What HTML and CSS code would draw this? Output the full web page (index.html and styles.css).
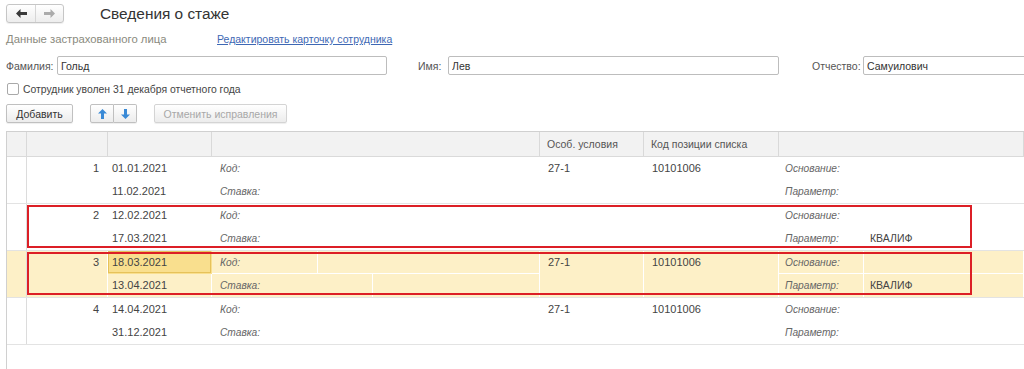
FILE: index.html
```html
<!DOCTYPE html>
<html lang="ru">
<head>
    <meta charset="UTF-8">
    <meta name="viewport" content="width=device-width, initial-scale=1.0">
    <title>Сведения о стаже</title>
    <link rel="stylesheet" href="styles.css">
</head>
<body>
    <!-- Title bar -->
    <div class="topbar">
        <div class="nav">
            <button class="nav-btn">
                <svg width="11" height="9" viewBox="0 0 11 9"><path d="M0 4.5 L4.5 0 V3 H11 V6 H4.5 V9 Z" fill="#3a3a3a"/></svg>
            </button>
            <button class="nav-btn">
                <svg width="11" height="9" viewBox="0 0 11 9"><path d="M11 4.5 L6.5 0 V3 H0 V6 H6.5 V9 Z" fill="#ababab"/></svg>
            </button>
        </div>
        <div class="title">Сведения о стаже</div>
    </div>

    <div class="info">
        <span class="info-label">Данные застрахованного лица</span>
        <a class="info-link" href="#">Редактировать карточку сотрудника</a>
    </div>

    <!-- Person fields -->
    <div class="fields">
        <div class="field field-1">
            <label class="field-label">Фамилия:</label>
            <input class="input" type="text" value="Гольд">
        </div>
        <div class="field field-2">
            <label class="field-label">Имя:</label>
            <input class="input" type="text" value="Лев">
        </div>
        <div class="field field-3">
            <label class="field-label">Отчество:</label>
            <input class="input" type="text" value="Самуилович">
        </div>
    </div>

    <div class="check-row">
        <span class="checkbox"></span>
        <span class="check-text">Сотрудник уволен 31 декабря отчетного года</span>
    </div>

    <!-- Command bar -->
    <div class="toolbar">
        <button class="btn btn-add">Добавить</button>
        <div class="btn-group">
            <button class="btn btn-arrow">
                <svg width="9" height="10" viewBox="0 0 9 10"><path d="M4.5 0 L9 4.5 H6 V10 H3 V4.5 H0 Z" fill="#3a8ad6"/></svg>
            </button>
            <button class="btn btn-arrow">
                <svg width="9" height="10" viewBox="0 0 9 10"><path d="M4.5 10 L9 5.5 H6 V0 H3 V5.5 H0 Z" fill="#3a8ad6"/></svg>
            </button>
        </div>
        <button class="btn btn-disabled">Отменить исправления</button>
    </div>

    <!-- Periods table -->
    <div class="grid">
        <div class="grid-head">
            <div class="head-cell"></div>
            <div class="head-cell"></div>
            <div class="head-cell"></div>
            <div class="head-cell"></div>
            <div class="head-cell">Особ. условия</div>
            <div class="head-cell">Код позиции списка</div>
            <div class="head-cell"></div>
        </div>

        <div class="record">
            <div class="c ind"></div>
            <div class="c num">1</div>
            <div class="c top date">01.01.2021</div>
            <div class="c top lbl kod-l">Код:</div>
            <div class="c top kod-v"></div>
            <div class="c osob">27-1</div>
            <div class="c pos">10101006</div>
            <div class="c top lbl osn-l">Основание:</div>
            <div class="c top val osn-v"></div>
            <div class="c bottom date">11.02.2021</div>
            <div class="c bottom lbl st-l">Ставка:</div>
            <div class="c bottom st-v"></div>
            <div class="c bottom lbl par-l">Параметр:</div>
            <div class="c bottom val par-v"></div>
        </div>

        <div class="record marked">
            <div class="c ind"></div>
            <div class="c num">2</div>
            <div class="c top date">12.02.2021</div>
            <div class="c top lbl kod-l">Код:</div>
            <div class="c top kod-v"></div>
            <div class="c osob"></div>
            <div class="c pos"></div>
            <div class="c top lbl osn-l">Основание:</div>
            <div class="c top val osn-v"></div>
            <div class="c bottom date">17.03.2021</div>
            <div class="c bottom lbl st-l">Ставка:</div>
            <div class="c bottom st-v"></div>
            <div class="c bottom lbl par-l">Параметр:</div>
            <div class="c bottom val par-v">КВАЛИФ</div>
        </div>

        <div class="record marked current">
            <div class="c ind"></div>
            <div class="c num">3</div>
            <div class="c top date sel">18.03.2021</div>
            <div class="c top lbl kod-l">Код:</div>
            <div class="c top kod-v"></div>
            <div class="c osob">27-1</div>
            <div class="c pos">10101006</div>
            <div class="c top lbl osn-l">Основание:</div>
            <div class="c top val osn-v"></div>
            <div class="c bottom date">13.04.2021</div>
            <div class="c bottom lbl st-l">Ставка:</div>
            <div class="c bottom st-v"></div>
            <div class="c bottom lbl par-l">Параметр:</div>
            <div class="c bottom val par-v">КВАЛИФ</div>
        </div>

        <div class="record">
            <div class="c ind"></div>
            <div class="c num">4</div>
            <div class="c top date">14.04.2021</div>
            <div class="c top lbl kod-l">Код:</div>
            <div class="c top kod-v"></div>
            <div class="c osob">27-1</div>
            <div class="c pos">10101006</div>
            <div class="c top lbl osn-l">Основание:</div>
            <div class="c top val osn-v"></div>
            <div class="c bottom date">31.12.2021</div>
            <div class="c bottom lbl st-l">Ставка:</div>
            <div class="c bottom st-v"></div>
            <div class="c bottom lbl par-l">Параметр:</div>
            <div class="c bottom val par-v"></div>
        </div>
    </div>
</body>
</html>
```

FILE: styles.css
```css
/* General */
body {
    margin: 0;
    font-family: "Liberation Sans", Arial, sans-serif;
    font-size: 10.5px;
    color: #333;
    background: #fff;
    height: 369px;
    overflow: hidden;
    display: flex;
    flex-direction: column;
}
button {
    font: inherit;
    margin: 0;
    cursor: pointer;
}

/* Title bar */
.topbar {
    display: flex;
    align-items: center;
    height: 19px;
    padding: 4px 6px 0;
}
.nav {
    display: flex;
    height: 19px;
    box-sizing: border-box;
    border: 1px solid #c6c6c6;
    border-radius: 3px;
    background: linear-gradient(#fff, #ededed);
    box-shadow: 0 1px 1px rgba(0, 0, 0, 0.07);
}
.nav-btn {
    width: 28px;
    height: 17px;
    padding: 0;
    border: 0;
    background: none;
    display: flex;
    align-items: center;
    justify-content: center;
}
.nav-btn + .nav-btn {
    border-left: 1px solid #d6d6d6;
}
.title {
    margin-left: 36px;
    font-size: 15.4px;
    color: #333;
}

/* Info line */
.info {
    display: flex;
    align-items: center;
    height: 22px;
    margin-top: 5px;
    padding: 0 6px;
}
.info-label {
    width: 211px;
    font-size: 11.3px;
    color: #8a8a7e;
}
.info-link {
    color: #3e68b4;
    text-decoration: underline;
}

/* Fields */
.fields {
    display: flex;
    margin-top: 6px;
    padding-left: 6px;
    overflow: hidden;
}
.field {
    display: flex;
    align-items: center;
    flex: none;
}
.field-label {
    color: #555;
    flex: none;
    white-space: nowrap;
}
.field-1 { width: 381px; }
.field-1 .field-label { width: 51px; }
.field-2 { width: 361px; margin-left: 31px; }
.field-2 .field-label { width: 30px; }
.field-3 { width: 300px; margin-left: 33px; }
.field-3 .field-label { width: 51px; }
.input {
    flex: 1;
    min-width: 0;
    height: 19px;
    box-sizing: border-box;
    border: 1px solid #bdbdbd;
    border-radius: 2px;
    padding: 0 3px;
    font: inherit;
    color: #333;
    outline: none;
}

/* Checkbox */
.check-row {
    display: flex;
    align-items: center;
    height: 20px;
    margin-top: 4px;
    padding-left: 7px;
}
.checkbox {
    width: 12px;
    height: 12px;
    box-sizing: border-box;
    border: 1px solid #a9a9a9;
    border-radius: 2px;
    background: #fff;
}
.check-text {
    margin-left: 4px;
    font-size: 10.4px;
    color: #444;
}

/* Command bar */
.toolbar {
    display: flex;
    height: 19px;
    margin-top: 5px;
    padding-left: 6px;
}
.btn {
    height: 19px;
    box-sizing: border-box;
    border: 1px solid #c0c0c0;
    border-radius: 2px;
    background: linear-gradient(#fff, #ececec);
    box-shadow: 0 1px 1px rgba(0, 0, 0, 0.07);
    color: #333;
    padding: 0;
}
.btn-add {
    width: 67px;
}
.btn-group {
    display: flex;
    margin-left: 17px;
}
.btn-arrow {
    width: 24px;
    display: flex;
    align-items: center;
    justify-content: center;
}
.btn-arrow:first-child {
    border-radius: 2px 0 0 2px;
}
.btn-arrow + .btn-arrow {
    border-left: 0;
    width: 23px;
    border-radius: 0 2px 2px 0;
}
.btn-disabled {
    width: 133px;
    margin-left: 17px;
    color: #a8a8a8;
    border-color: #d4d4d4;
    cursor: default;
}

/* Table */
.grid {
    flex: 1;
    margin: 8px 0 0 6px;
    border-left: 1px solid #d0d0d0;
    border-top: 1px solid #d0d0d0;
}
.grid-head {
    display: grid;
    grid-template-columns: 20px 81px 104px 328px 104px 135px 1fr;
    height: 25px;
    box-sizing: border-box;
    background: #f2f2f2;
    border-bottom: 1px solid #dadada;
}
.head-cell {
    border-right: 1px solid #d9d9d9;
    padding: 0 7px;
    line-height: 24px;
    color: #555;
    white-space: nowrap;
}
.record {
    position: relative;
    display: grid;
    grid-template-columns: 20px 81px 104px 106px 55px 167px 104px 135px 85px 1fr;
    grid-template-rows: 23px 23px;
    border-bottom: 1px solid #e3e3e3;
    font-size: 11px;
    color: #444;
}
.record.current {
    background: #fdf0c7;
}
.c {
    box-sizing: border-box;
    border-right: 1px solid #fff;
    padding: 0 6px;
    line-height: 22px;
    white-space: nowrap;
    overflow: hidden;
}
.top {
    grid-row: 1;
    border-bottom: 1px solid #fff;
    line-height: 23px;
}
.bottom {
    grid-row: 2;
    line-height: 23px;
}
.lbl {
    font-style: italic;
    font-size: 10.2px;
    color: #666;
}
.val {
    font-size: 10.5px;
}
.ind { grid-column: 1; grid-row: 1 / 3; border-right-color: #dcdcdc; }
.num { grid-column: 2; grid-row: 1 / 3; text-align: right; padding-right: 8px; }
.date { grid-column: 3; padding-left: 4px; }
.kod-l { grid-column: 4; padding-left: 8px; }
.kod-v { grid-column: 5 / 7; }
.osob { grid-column: 7; grid-row: 1 / 3; padding-left: 8px; }
.pos { grid-column: 8; grid-row: 1 / 3; padding-left: 8px; }
.osn-l { grid-column: 9; }
.osn-v { grid-column: 10; }
.st-l { grid-column: 4 / 6; padding-left: 8px; }
.st-v { grid-column: 6; }
.par-l { grid-column: 9; }
.par-v { grid-column: 10; }
.c.sel {
    background: #f9df8e;
    box-shadow: inset 0 0 0 1px #e6c25a;
    border-color: transparent;
    line-height: 22px;
}

/* Highlight frame drawn over marked records */
.record.marked::after {
    content: "";
    position: absolute;
    left: 20px;
    width: 945px;
    top: 1px;
    bottom: 2px;
    box-sizing: border-box;
    border: 2px solid #dc1f26;
    pointer-events: none;
}
```
